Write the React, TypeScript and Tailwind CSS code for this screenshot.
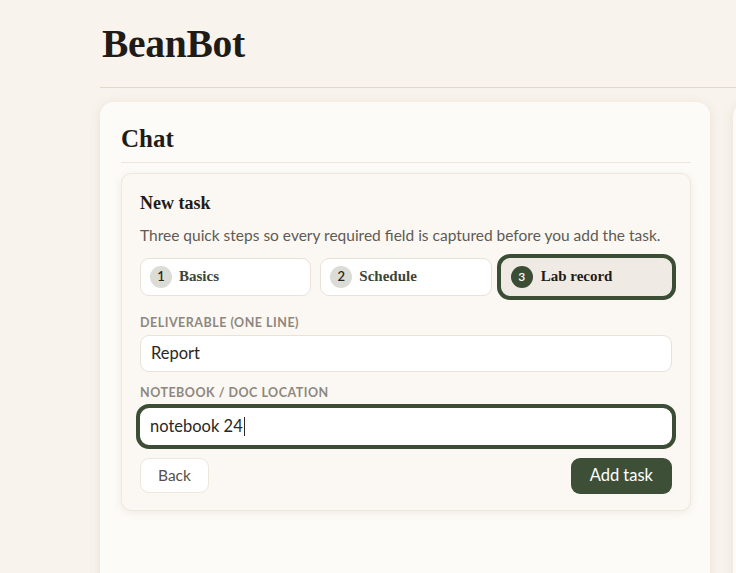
import { useState } from "react"

const serif = { fontFamily: '"Liberation Serif", "DejaVu Serif", serif' }

const steps = [
  { n: 1, label: "Basics" },
  { n: 2, label: "Schedule" },
  { n: 3, label: "Lab record" },
]

export default function App() {
  const [deliverable, setDeliverable] = useState("Report")
  const location = "notebook 24"
  const active = 3

  return (
    <div className="h-screen w-full overflow-hidden bg-[#f8f3ec] pl-[100px] font-['Lato','Noto_Sans',sans-serif] text-[#2a2723]">
      <header className="flex h-[88px] w-[700px] items-center border-b border-[#e4d6ca] pl-[2px]">
        <h1 style={serif} className="mt-[2px] text-[39.5px] font-bold tracking-[-0.3px] text-[#1f1b17]">
          BeanBot
        </h1>
      </header>

      <div className="mt-[14px] flex w-[700px] gap-[23px]">
        <main className="h-[500px] w-[610px] shrink-0 rounded-[14px] bg-[#fdfbf7] pl-[21px] pr-[19px] pt-[18px] shadow-[0_2px_12px_rgba(120,100,80,0.12)]">
          <h2 style={serif} className="pb-[4px] text-[25px] font-bold text-[#1f1b17]">
            Chat
          </h2>
          <div className="border-t border-[#ece6dd]" />

          <section className="mt-[10px] rounded-[10px] border border-[#ede7de] bg-[#fbf8f3] px-[18px] pb-[16px] pt-[18px] shadow-[0_2px_8px_rgba(120,100,80,0.10)]">
            <h3 style={serif} className="text-[18px] font-bold leading-[22px] text-[#1f1b17]">
              New task
            </h3>
            <p className="mt-[11px] text-[15.5px] leading-[20px] text-[#5f5a54]">
              Three quick steps so every required field is captured before you add the task.
            </p>

            <div className="mt-[13px] flex gap-[9px]">
              {steps.map(s => {
                const on = s.n === active
                return (
                  <button
                    key={s.n}
                    className={
                      on
                        ? "flex h-[38px] flex-1 items-center gap-[8px] rounded-[9px] bg-[#efebe4] px-[10px] outline outline-[4px] outline-[#3b4d35]"
                        : "flex h-[38px] flex-1 items-center gap-[7px] rounded-[9px] border border-[#e8e2d9] bg-white px-[9px]"
                    }
                  >
                    <span
                      className={
                        on
                          ? "flex h-[22px] w-[22px] items-center justify-center rounded-full bg-[#3b4d35] text-[12px] font-semibold text-white"
                          : "flex h-[22px] w-[22px] items-center justify-center rounded-full bg-[#dcdcd6] text-[13px] font-semibold text-[#2a2723]"
                      }
                    >
                      {s.n}
                    </span>
                    <span
                      style={serif}
                      className={on ? "text-[15px] font-bold text-[#1f1b17]" : "text-[15px] font-bold text-[#3a4636]"}
                    >
                      {s.label}
                    </span>
                  </button>
                )
              })}
            </div>

            <label className="mt-[19px] block text-[12.5px] font-bold uppercase leading-[16px] tracking-[0.5px] text-[#8d877f]">
              Deliverable (one line)
            </label>
            <input
              value={deliverable}
              onChange={e => setDeliverable(e.target.value)}
              className="mt-[4px] h-[37px] w-full rounded-[9px] border border-[#e8e2d9] bg-white px-[10px] text-[16.5px] text-[#2a2723] outline-none"
            />

            <label className="mt-[13px] block text-[12.5px] font-bold uppercase leading-[16px] tracking-[0.5px] text-[#8d877f]">
              Notebook / Doc location
            </label>
            <div className="mt-[7px] flex h-[37px] w-full items-center rounded-[9px] bg-white px-[10px] outline outline-[4px] outline-[#3b4d35]">
              <span className="text-[16.5px] text-[#2a2723]">{location}</span>
              <span className="ml-[1px] h-[19px] w-[1.5px] bg-[#2a2723]" />
            </div>

            <div className="mt-[13px] flex items-center justify-between">
              <button className="h-[35px] rounded-[9px] border border-[#ece6dd] bg-white px-[17px] text-[15.5px] text-[#55504a]">
                Back
              </button>
              <button className="h-[36px] rounded-[9px] bg-[#3d4f37] px-[19px] text-[16.5px] text-white">
                Add task
              </button>
            </div>
          </section>
        </main>

        <aside className="h-[500px] w-[300px] shrink-0 rounded-[14px] bg-[#fdfbf7] shadow-[0_2px_12px_rgba(120,100,80,0.12)]" />
      </div>
    </div>
  )
}
